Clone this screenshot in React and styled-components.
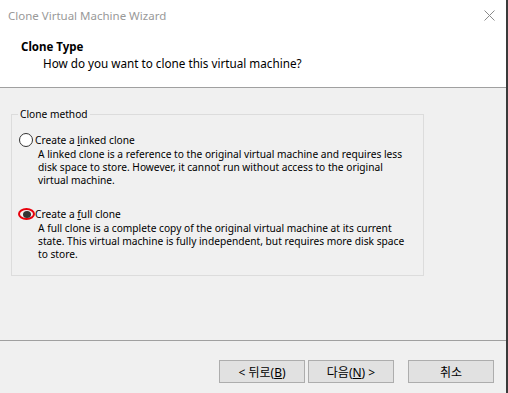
import React from 'react'
import styled, { createGlobalStyle } from 'styled-components'

const GlobalStyle = createGlobalStyle`
body {
  margin: 0;
  font-family: "Noto Sans", "Noto Sans CJK KR", sans-serif;
  font-size: 11.5px;
  color: #000;
  background: #fff;
}
`

const Window = styled.div`
width: 506px;
height: 393px;
border-right: 2px solid #3a3a3a;
display: flex;
flex-direction: column;
background: #f0f0f0;
overflow: hidden;
`
const TitleBar = styled.div`
height: 30px;
flex: none;
display: flex;
align-items: center;
justify-content: space-between;
padding: 0 11px 0 8px;
background: #fff;
color: #999;
`
const Header = styled.div`
height: 58px;
flex: none;
background: #fff;
border-bottom: 1px solid #a0a0a0;
padding: 9px 0 0 21px;
box-sizing: border-box;
`
const HeaderTitle = styled.div`
font-weight: bold;
line-height: 16px;
`
const HeaderSub = styled.div`
padding-left: 22px;
line-height: 16px;
font-size: 11.7px;
`
const Body = styled.div`
height: 253px;
flex: none;
padding: 19px 0 0 11px;
box-sizing: border-box;
border-bottom: 1px solid #a0a0a0;
font-size: 10.2px;
`
const Group = styled.fieldset`
margin: 0;
width: 413px;
min-width: 0;
height: 169px;
box-sizing: border-box;
border: 1px solid #dcdcdc;
padding: 11px 0 0 6px;
`
const Legend = styled.legend`
padding: 0 2px;
margin-left: 0;
line-height: 14px;
`
const Option = styled.div`
margin-bottom: ${p => p.gap}px;
`
const RadioRow = styled.div`
display: flex;
align-items: center;
height: 16px;
`
const Radio = styled.span`
box-sizing: border-box;
width: ${p => (p.checked ? 17 : 14)}px;
height: ${p => (p.checked ? 12 : 14)}px;
margin-left: ${p => (p.checked ? 0 : 1)}px;
margin-right: ${p => (p.checked ? 0 : 2)}px;
border-radius: 50%;
border: ${p => (p.checked ? '2px solid #e8000b' : '1px solid #333')};
background: ${p => (p.checked ? '#f0f0f0' : '#fff')};
display: flex;
align-items: center;
justify-content: center;
&::after {
  content: '';
  display: ${p => (p.checked ? 'block' : 'none')};
  width: 8px;
  height: 7px;
  border-radius: 50%;
  background: #333;
}
`
const Desc = styled.div`
padding-left: 20px;
line-height: 13px;
white-space: nowrap;
`
const Footer = styled.div`
flex: 1;
display: flex;
justify-content: flex-end;
padding: 19px 12px 0 0;
`
const Button = styled.button`
width: 86px;
height: 23px;
margin-left: ${p => p.gap}px;
background: #e1e1e1;
border: 1px solid #adadad;
font-family: inherit;
font-size: 12px;
color: #000;
padding: 0;
`

const Close = () => (
  <svg width="11" height="11" viewBox="0 0 11 11">
    <path d="M0.5 0.5 L10.5 10.5 M10.5 0.5 L0.5 10.5" stroke="#8a8a8a" strokeWidth="1" fill="none" />
  </svg>
)

export default function App() {
  return (
    <Window>
      <GlobalStyle />
      <TitleBar>
        <span>Clone Virtual Machine Wizard</span>
        <Close />
      </TitleBar>
      <Header>
        <HeaderTitle>Clone Type</HeaderTitle>
        <HeaderSub>How do you want to clone this virtual machine?</HeaderSub>
      </Header>
      <Body>
        <Group>
          <Legend>Clone method</Legend>
          <Option gap={19}>
            <RadioRow>
              <Radio />
              <span>Create a <u>l</u>inked clone</span>
            </RadioRow>
            <Desc>
              A linked clone is a reference to the original virtual machine and requires less<br />
              disk space to store. However, it cannot run without access to the original<br />
              virtual machine.
            </Desc>
          </Option>
          <Option gap={0}>
            <RadioRow>
              <Radio checked />
              <span>Create a <u>f</u>ull clone</span>
            </RadioRow>
            <Desc>
              A full clone is a complete copy of the original virtual machine at its current<br />
              state. This virtual machine is fully independent, but requires more disk space<br />
              to store.
            </Desc>
          </Option>
        </Group>
      </Body>
      <Footer>
        <Button gap={0}>&lt; 뒤로(<u>B</u>)</Button>
        <Button gap={3}>다음(<u>N</u>) &gt;</Button>
        <Button gap={14}>취소</Button>
      </Footer>
    </Window>
  )
}
